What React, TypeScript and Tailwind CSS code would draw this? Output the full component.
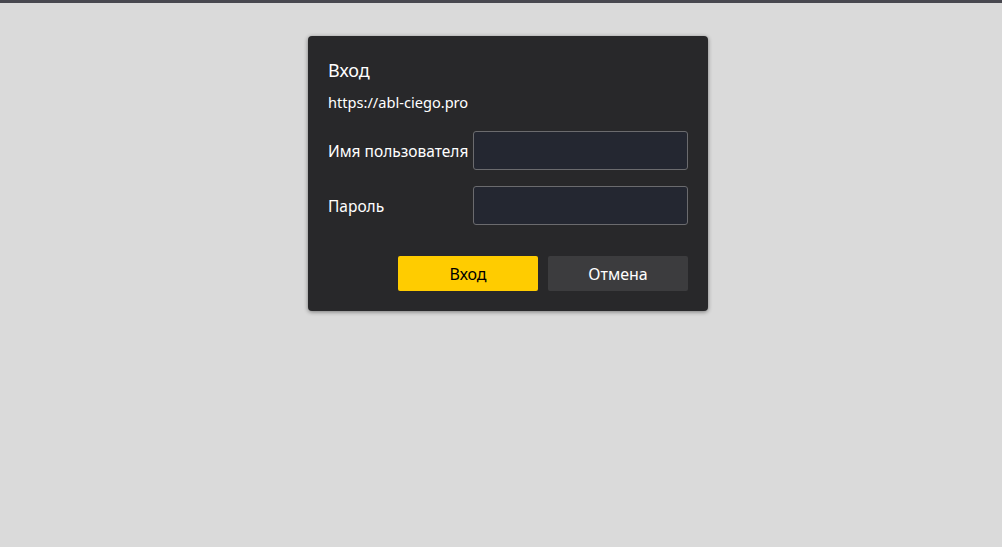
import React from 'react';

export default function App() {
  return (
    <div className="min-h-[547px] bg-[#dadada] font-['Noto_Sans',sans-serif]">
      <div className="h-[3px] bg-[#48484f]" />
      <div className="flex justify-center pt-[33px] pl-[14px]">
        <form
          className="w-[400px] rounded-[4px] bg-[#28282a] px-5 pt-[22px] pb-5 text-white shadow-[0_1px_4px_rgba(0,0,0,0.45)]"
          onSubmit={(e) => e.preventDefault()}
        >
          <h1 className="text-[18px] leading-[24px]">Вход</h1>
          <div className="mt-[11px] text-[14.6px] leading-[18px]">https://abl-ciego.pro</div>

          <div className="mt-[20px] flex flex-col gap-[16px]">
            <label className="flex items-center justify-between">
              <span className="pt-[3px] text-[15.5px]">Имя пользователя</span>
              <input
                type="text"
                className="h-[39px] w-[215px] rounded-[3px] border border-[#6b6b6e] bg-[#242731] px-2 text-[14px] text-white outline-none"
              />
            </label>
            <label className="flex items-center justify-between">
              <span className="pt-[3px] text-[15.5px]">Пароль</span>
              <input
                type="password"
                className="h-[39px] w-[215px] rounded-[3px] border border-[#6b6b6e] bg-[#242731] px-2 text-[14px] text-white outline-none"
              />
            </label>
          </div>

          <div className="mt-[31px] flex justify-end gap-[10px]">
            <button
              type="submit"
              className="h-[35px] w-[140px] rounded-[2px] bg-[#ffcc00] text-[16px] text-black"
            >
              Вход
            </button>
            <button
              type="button"
              className="h-[35px] w-[140px] rounded-[2px] bg-[#3c3c3e] text-[16px] text-white"
            >
              Отмена
            </button>
          </div>
        </form>
      </div>
    </div>
  );
}
